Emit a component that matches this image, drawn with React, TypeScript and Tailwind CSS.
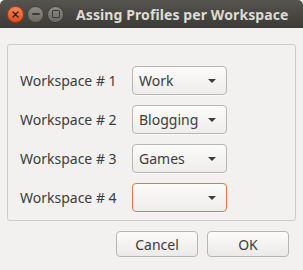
import React from 'react'

const rows = [
  { label: 'Workspace # 1', value: 'Work' },
  { label: 'Workspace # 2', value: 'Blogging' },
  { label: 'Workspace # 3', value: 'Games' },
  { label: 'Workspace # 4', value: '', focused: true },
]

function Caret() {
  return (
    <svg width="10" height="6" viewBox="0 0 10 6" className="shrink-0">
      <path d="M1 1 L9 1 L5 5 Z" fill="#3c3c3c" />
    </svg>
  )
}

function Combo({ value, focused }: { value: string; focused?: boolean }) {
  return (
    <div
      className={`w-[95px] h-[29px] rounded-[4px] border flex items-center justify-between pl-[6px] pr-[9px] bg-gradient-to-b from-[#fbfbfa] to-[#eeedec] shadow-[0_1px_0_rgba(255,255,255,0.6)] ${
        focused ? 'border-[#e0764c]' : 'border-[#b9b6b2]'
      }`}
    >
      <span className="text-[14px] text-[#3c3c3c] leading-none">{value}</span>
      <Caret />
    </div>
  )
}

export default function App() {
  return (
    <div
      className="w-[303px] h-[270px] bg-[#f2f1f0] flex flex-col overflow-hidden"
      style={{ fontFamily: '"Noto Sans", "DejaVu Sans", sans-serif' }}
    >
      {/* Title bar */}
      <div className="h-[28px] shrink-0 rounded-t-[5px] bg-gradient-to-b from-[#55544f] to-[#3c3b37] flex items-center pl-[7px]">
        <div className="w-[17px] h-[17px] rounded-full bg-gradient-to-b from-[#f4875b] to-[#df4a16] border border-[#a83b10] flex items-center justify-center">
          <svg width="7" height="7" viewBox="0 0 7 7">
            <path d="M1 1 L6 6 M6 1 L1 6" stroke="#3a1e10" strokeWidth="1.4" strokeLinecap="round" />
          </svg>
        </div>
        <div className="ml-[3px] w-[17px] h-[17px] rounded-full bg-gradient-to-b from-[#8c8b86] to-[#6a6965] border border-[#3f3e3a] flex items-center justify-center">
          <div className="w-[8px] h-[2px] bg-[#3c3b37] rounded-[1px]" />
        </div>
        <div className="ml-[3px] w-[17px] h-[17px] rounded-full bg-gradient-to-b from-[#8c8b86] to-[#6a6965] border border-[#3f3e3a] flex items-center justify-center">
          <div className="w-[8px] h-[8px] border-[1.5px] border-[#3c3b37] rounded-[1px]" />
        </div>
        <span className="ml-[12px] text-[14px] font-bold text-[#dfdbd2] tracking-[0.1px]">
          Assing Profiles per Workspace
        </span>
      </div>

      {/* Body */}
      <div className="flex-1 flex flex-col px-[7px] pt-[16px]">
        <div className="h-[177px] border border-[#cfcbc6] rounded-[3px] pl-[12px] pt-[21px] flex flex-col gap-[10px]">
          {rows.map((r) => (
            <div key={r.label} className="flex items-center">
              <span className="w-[112px] text-[14px] text-[#3c3c3c]">{r.label}</span>
              <Combo value={r.value} focused={r.focused} />
            </div>
          ))}
        </div>

        <div className="flex justify-end gap-[9px] mt-[10px] pr-[7px]">
          {['Cancel', 'OK'].map((b) => (
            <button
              key={b}
              className="w-[82px] h-[26px] rounded-[4px] border border-[#b9b6b2] bg-gradient-to-b from-[#fbfbfa] to-[#eceae8] text-[14px] text-[#3c3c3c] flex items-center justify-center"
            >
              {b}
            </button>
          ))}
        </div>
      </div>
    </div>
  )
}
